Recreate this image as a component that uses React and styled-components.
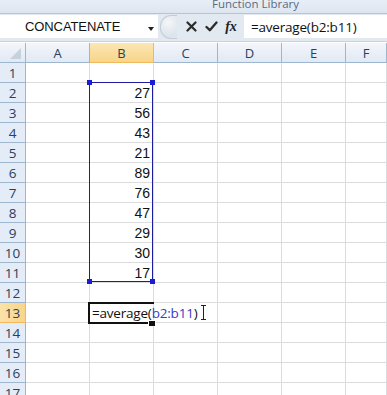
import React from "react";
import styled, { createGlobalStyle } from "styled-components";

const Global = createGlobalStyle`
  html, body { margin: 0; padding: 0; background: #fff; overflow: hidden; }
  body { font-family: "Liberation Sans", Arial, sans-serif; }
`;

const Colors = {
  ribbon: `#dde6f0`,
  grid: `#dadcdd`,
  headBorder: `#9eb6ce`,
  headText: `#27415f`,
  select: `#1c1c9c`,
  ref: `#3a3ac8`
};

const Page = styled.div`
  width: 387px;
  height: 395px;
  overflow: hidden;
  background: #fff;
`;

const RibbonStrip = styled.div`
  height: 13px;
  border-bottom: 1px solid #b6c4d6;
  background: linear-gradient(#e8eef6, ${Colors.ribbon});
  display: flex;
  justify-content: flex-end;
  padding-right: 88px;
  overflow: hidden;
`;

const GroupLabel = styled.span`
  font-family: "Open Sans", "Liberation Sans", sans-serif;
  font-size: 11.5px;
  line-height: 10px;
  color: #5b6a80;
  margin-top: -1px;
`;

const FormulaBar = styled.div`
  height: 28px;
  background: #e3e9f1;
  display: flex;
  align-items: stretch;
  padding: 1px 0 3px 0;
  box-sizing: border-box;
  border-bottom: 1px solid #c9d3df;
`;

const NameBox = styled.div`
  width: 158px;
  background: #fff;
  display: flex;
  align-items: center;
  position: relative;
  font-size: 13px;
  color: #111;
  padding-left: 25px;
  box-sizing: border-box;
  letter-spacing: -0.1px;
`;

const DropArrow = styled.span`
  position: absolute;
  left: 148px;
  top: 12px;
  border-left: 3px solid transparent;
  border-right: 3px solid transparent;
  border-top: 4px solid #222;
`;

const Buttons = styled.div`
  width: 86px;
  display: flex;
  align-items: center;
  position: relative;
`;

const Knob = styled.span`
  width: 16px;
  height: 22px;
  border-radius: 11px 0 0 11px;
  border: 1px solid #c3ccd8;
  border-right: none;
  background: radial-gradient(circle at 45% 30%, #f4f6f9, #dfe5ec 70%);
  margin-left: 2px;
  margin-right: 4px;
`;

const IconSlot = styled.span`
  width: 20px;
  display: flex;
  justify-content: center;
  align-items: center;
`;

const Fx = styled.span`
  font-family: "Liberation Serif", serif;
  font-style: italic;
  font-weight: bold;
  font-size: 14px;
  color: #222;
`;

const FormulaInput = styled.div`
  flex: 1;
  background: #fff;
  display: flex;
  align-items: center;
  padding-left: 7px;
  font-family: "Open Sans", "Liberation Sans", sans-serif;
  font-size: 13.5px;
  color: #111;
  letter-spacing: -0.2px;
`;

const Sheet = styled.div`
  position: relative;
  display: grid;
  grid-template-columns: 26px repeat(5, 64px) 1fr;
  grid-template-rows: 20px repeat(17, 20px);
  margin-top: 1px;
`;

const ColHead = styled.div`
  box-sizing: border-box;
  border-right: 1px solid ${(p) => (p.$active ? "#f2b95a" : Colors.headBorder)};
  border-bottom: 1px solid ${(p) => (p.$active ? "#f2b95a" : Colors.headBorder)};
  background: ${(p) =>
    p.$active
      ? "linear-gradient(#fbe6b4, #f8d58a)"
      : "linear-gradient(#f3f6fb, #e1e9f4)"};
  color: ${Colors.headText};
  font-family: "Open Sans", "Liberation Sans", sans-serif;
  font-size: 13px;
  display: flex;
  align-items: center;
  justify-content: center;
  position: relative;
`;

const RowHead = styled(ColHead)`
  background: ${(p) =>
    p.$active ? "linear-gradient(90deg, #fbe2a8, #f8d58a)" : "#e4ecf7"};
  font-size: 13.5px;
  padding-top: 1px;
`;

const CornerMark = styled.span`
  position: absolute;
  right: 4px;
  bottom: 3px;
  border-left: 11px solid transparent;
  border-bottom: 11px solid #c6d1de;
`;

const Cell = styled.div`
  box-sizing: border-box;
  border-right: 1px solid ${Colors.grid};
  border-bottom: 1px solid ${Colors.grid};
  font-family: "Liberation Sans", Arial, sans-serif;
  font-size: 14px;
  color: #111;
  display: flex;
  align-items: flex-end;
  justify-content: flex-end;
  padding: 0 3px 1px 0;
  white-space: nowrap;
`;

const SelectionBox = styled.div`
  position: absolute;
  left: 89px;
  top: 39px;
  width: 64px;
  height: 200px;
  box-sizing: border-box;
  border: 1px solid ${Colors.select};
  pointer-events: none;
`;

const Handle = styled.span`
  position: absolute;
  width: 5px;
  height: 5px;
  background: #1b1bd6;
  ${(p) => (p.$top ? "top: -3px;" : "bottom: -3px;")}
  ${(p) => (p.$left ? "left: -3px;" : "right: -3px;")}
`;

const EditCell = styled.div`
  position: absolute;
  left: 88px;
  top: 259px;
  width: 66px;
  height: 22px;
  box-sizing: border-box;
  border: 2px solid #111;
  border-right: none;
  background: transparent;
`;

const FillHandle = styled.span`
  position: absolute;
  right: -2px;
  bottom: -4px;
  width: 6px;
  height: 5px;
  background: #111;
  border: 1px solid #fff;
  border-bottom: none;
`;

const EditText = styled.span`
  position: absolute;
  left: 2px;
  top: 0px;
  font-family: "Open Sans", "Liberation Sans", sans-serif;
  font-size: 13.5px;
  line-height: 18px;
  color: #111;
  white-space: nowrap;
  letter-spacing: -0.2px;
`;

const RefText = styled.span`
  color: ${Colors.ref};
`;

const Cursor = styled.span`
  position: absolute;
  left: 113px;
  top: 1px;
  width: 1px;
  height: 15px;
  background: #222;
  &::before,
  &::after {
    content: "";
    position: absolute;
    left: -2px;
    width: 5px;
    height: 1px;
    background: #222;
  }
  &::before { top: 0; }
  &::after { bottom: 0; }
`;

const columns = ["A", "B", "C", "D", "E", "F"];
const values = { 2: 27, 3: 56, 4: 43, 5: 21, 6: 89, 7: 76, 8: 47, 9: 29, 10: 30, 11: 17 };
const rows = Array.from({ length: 17 }, (_, i) => i + 1);

const CrossIcon = () => (
  <svg width="11" height="11" viewBox="0 0 11 11">
    <path d="M1.5 1.5 L9.5 9.5 M9.5 1.5 L1.5 9.5" stroke="#2b2b2b" strokeWidth="2.2" strokeLinecap="round" />
  </svg>
);

const CheckIcon = () => (
  <svg width="13" height="11" viewBox="0 0 13 11">
    <path d="M1.5 6 L4.8 9.2 L11.5 1.5" stroke="#2b2b2b" strokeWidth="2.3" fill="none" strokeLinecap="round" strokeLinejoin="round" />
  </svg>
);

const App = () => {
  return (
    <Page>
      <Global />
      <RibbonStrip>
        <GroupLabel>Function Library</GroupLabel>
      </RibbonStrip>
      <FormulaBar>
        <NameBox>
          CONCATENATE
          <DropArrow />
        </NameBox>
        <Buttons>
          <Knob />
          <IconSlot><CrossIcon /></IconSlot>
          <IconSlot><CheckIcon /></IconSlot>
          <IconSlot><Fx>fx</Fx></IconSlot>
        </Buttons>
        <FormulaInput>=average(b2:b11)</FormulaInput>
      </FormulaBar>
      <Sheet>
        <ColHead>
          <CornerMark />
        </ColHead>
        {columns.map((c) => (
          <ColHead key={c} $active={c === "B"}>
            {c}
          </ColHead>
        ))}
        {rows.map((r) => (
          <React.Fragment key={r}>
            <RowHead $active={r === 13}>{r}</RowHead>
            {columns.map((c) => (
              <Cell key={c}>{c === "B" && values[r] ? values[r] : ""}</Cell>
            ))}
          </React.Fragment>
        ))}
        <SelectionBox>
          <Handle $top $left />
          <Handle $top />
          <Handle $left />
          <Handle />
        </SelectionBox>
        <EditCell>
          <EditText>
            =average(<RefText>b2:b11</RefText>)
          </EditText>
          <Cursor />
          <FillHandle />
        </EditCell>
      </Sheet>
    </Page>
  );
};

export default App;
